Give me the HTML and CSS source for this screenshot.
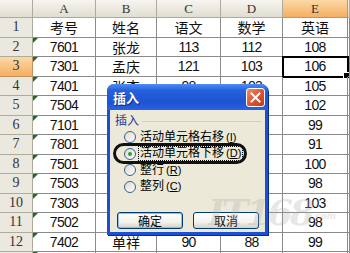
FILE: index.html
```html
<!DOCTYPE html>
<html>
	<head>
		<meta charset="UTF-8">
		<title>插入</title>
		<link rel="stylesheet" href="styles.css">
	</head>
	<body>
		<div class="sheet">
			<div class="grid">
				<div class="hd"></div><div class="hd">A</div><div class="hd">B</div><div class="hd">C</div><div class="hd">D</div><div class="hd on">E</div><div class="hd"></div>

				<div class="rh">1</div><div class="c">考号</div><div class="c">姓名</div><div class="c">语文</div><div class="c">数学</div><div class="c">英语</div><div class="c"></div>
				<div class="rh">2</div><div class="c n flag">7601</div><div class="c">张龙</div><div class="c n">113</div><div class="c n">112</div><div class="c n">108</div><div class="c"></div>
				<div class="rh on">3</div><div class="c n flag">7301</div><div class="c">孟庆</div><div class="c n">121</div><div class="c n">103</div><div class="c n active">106</div><div class="c"></div>
				<div class="rh">4</div><div class="c n flag">7401</div><div class="c">张杰</div><div class="c n">98</div><div class="c n">103</div><div class="c n">105</div><div class="c"></div>
				<div class="rh">5</div><div class="c n flag">7504</div><div class="c"></div><div class="c"></div><div class="c"></div><div class="c n">102</div><div class="c"></div>
				<div class="rh">6</div><div class="c n flag">7101</div><div class="c"></div><div class="c"></div><div class="c"></div><div class="c n">99</div><div class="c"></div>
				<div class="rh">7</div><div class="c n flag">7801</div><div class="c"></div><div class="c"></div><div class="c"></div><div class="c n">91</div><div class="c"></div>
				<div class="rh">8</div><div class="c n flag">7501</div><div class="c"></div><div class="c"></div><div class="c"></div><div class="c n">100</div><div class="c"></div>
				<div class="rh">9</div><div class="c n flag">7503</div><div class="c"></div><div class="c"></div><div class="c"></div><div class="c n">98</div><div class="c"></div>
				<div class="rh">10</div><div class="c n flag">7303</div><div class="c"></div><div class="c"></div><div class="c"></div><div class="c n">103</div><div class="c"></div>
				<div class="rh">11</div><div class="c n flag">7502</div><div class="c"></div><div class="c"></div><div class="c"></div><div class="c n">98</div><div class="c"></div>
				<div class="rh">12</div><div class="c n flag">7402</div><div class="c">单祥</div><div class="c n">90</div><div class="c n">88</div><div class="c n">99</div><div class="c"></div>
				<div class="rh"></div><div class="c flag"></div><div class="c"></div><div class="c"></div><div class="c"></div><div class="c"></div><div class="c"></div>
			</div>

			<!-- 插入对话框 -->
			<div class="dialog">
				<div class="title">
					<span>插入</span>
					<a class="close" href="javascript:;">
						<svg width="11" height="11" viewBox="0 0 11 11"><path d="M1.5 1.5 L9.5 9.5 M9.5 1.5 L1.5 9.5" stroke="#fff" stroke-width="2" stroke-linecap="square"/></svg>
					</a>
				</div>
				<div class="body">
					<div class="group">插入</div>
					<ul class="opts">
						<li><i class="radio"></i><span>活动单元格右移<em>(<u>I</u>)</em></span></li>
						<li><i class="radio checked"></i><span class="focus">活动单元格下移<em>(<u>D</u>)</em></span></li>
						<li><i class="radio"></i><span>整行<em>(<u>R</u>)</em></span></li>
						<li><i class="radio"></i><span>整列<em>(<u>C</u>)</em></span></li>
					</ul>
					<div class="btns">
						<a class="btn def" href="javascript:;">确定</a>
						<a class="btn" href="javascript:;">取消</a>
					</div>
				</div>
			</div>

			<!-- 标注圈 -->
			<div class="ring"></div>

			<div class="mark">IT168<small>.com</small></div>
		</div>
	</body>
</html>
```

FILE: styles.css
```css
*{
	margin: 0;
	padding: 0;
	box-sizing: border-box;
}
body{
	background: #fff;
	font-family: "Liberation Sans", "Noto Sans CJK SC", sans-serif;
}
.sheet{
	position: relative;
	width: 350px;
	height: 253px;
	overflow: hidden;
}
.grid{
	display: grid;
	grid-template-columns: 33px 63px 61px 64px 62px 65px 2px;
	grid-template-rows: 18px repeat(13, 19.5px);
}
.grid div{
	display: flex;
	align-items: center;
	justify-content: center;
	border-right: 1px solid #8a8a8a;
	border-bottom: 1px solid #8a8a8a;
	line-height: 1;
	color: #111;
}
.grid .hd{
	background: linear-gradient(#f7f5ef, #e0ddd2);
	border-color: #aeaa9c;
	font-family: "Liberation Serif", serif;
	font-size: 13px;
	color: #333;
}
.grid .rh{
	background: #ebe8df;
	border-color: #aeaa9c;
	font-family: "Liberation Serif", serif;
	font-size: 14px;
	color: #333;
}
.grid .on{
	background: linear-gradient(#fcd9a6, #f4ae62);
	border-color: #c9925a;
}
.grid .c{
	font-family: "Noto Sans CJK SC", sans-serif;
	font-size: 14px;
	position: relative;
}
.grid .n{
	font-family: "Liberation Sans", sans-serif;
	font-size: 14px;
	letter-spacing: -0.7px;
}
.grid .flag:before{
	content: "";
	position: absolute;
	left: 0;
	top: 0;
	border-top: 5px solid #1f6b2a;
	border-right: 5px solid transparent;
}
.grid .active{
	outline: 2px solid #000;
	outline-offset: -1px;
}
.grid .active:after{
	content: "";
	position: absolute;
	right: -3px;
	bottom: -3px;
	width: 5px;
	height: 5px;
	background: #000;
	border: 1px solid #fff;
}

.dialog{
	position: absolute;
	left: 107px;
	top: 84px;
	width: 161px;
	height: 151px;
	display: flex;
	flex-direction: column;
	padding: 0 3px 3px;
	background: #1c4fd2;
	border-radius: 7px 7px 0 0;
	box-shadow: 1px 1px 0 #0a2a8e;
}
.title{
	height: 26px;
	display: flex;
	align-items: center;
	justify-content: space-between;
	margin: 0 -3px;
	padding-left: 6px;
	padding-right: 3px;
	border-radius: 7px 7px 0 0;
	background: linear-gradient(#4d8ef5, #2660dc 25%, #1d53d4 70%, #2a62e0);
	color: #fff;
	font-family: "Noto Sans CJK SC", sans-serif;
	font-weight: bold;
	font-size: 13px;
	text-shadow: 1px 1px 0 #0c2a88;
}
.close{
	width: 19px;
	height: 19px;
	display: flex;
	align-items: center;
	justify-content: center;
	border: 1px solid #fff;
	border-radius: 3px;
	background: linear-gradient(135deg, #f08c6c, #d9532e 55%, #c23c18);
}
.body{
	flex: 1;
	background: #ece9d8;
	padding: 4px 0 0 5px;
	font-family: "Liberation Sans", "Noto Sans CJK SC", sans-serif;
	font-size: 12px;
	color: #000;
}
.group{
	display: flex;
	align-items: center;
	height: 14px;
	line-height: 14px;
	color: #1c3d9a;
}
.group:after{
	content: "";
	flex: 1;
	height: 1px;
	margin: 1px 4px 0 3px;
	background: #d0d0bf;
}
.opts{
	list-style: none;
	margin-top: 1px;
	padding-left: 9px;
}
.opts li{
	height: 16.5px;
	display: flex;
	align-items: center;
}
.radio{
	width: 12px;
	height: 12px;
	margin-right: 3px;
	border: 1px solid #3a5f8f;
	border-radius: 50%;
	background: linear-gradient(135deg, #dcd9cf, #fff);
	display: flex;
	align-items: center;
	justify-content: center;
}
.radio.checked:after{
	content: "";
	width: 4px;
	height: 4px;
	border-radius: 50%;
	background: #2aa52a;
}
.opts span{
	line-height: 13px;
	padding: 0 1px;
	white-space: nowrap;
}
.opts em{
	font-style: normal;
	font-size: 11px;
	margin-left: 2px;
}
.opts .focus{
	outline: 1px dotted #000;
}
.btns{
	display: flex;
	gap: 10px;
	margin-top: 17px;
	padding-left: 2px;
}
.btn{
	width: 66px;
	height: 17px;
	display: flex;
	align-items: center;
	justify-content: center;
	border: 1px solid #003c74;
	border-radius: 3px;
	background: linear-gradient(#fff, #f3f2ec 60%, #d6d0c5);
	color: #000;
	text-decoration: none;
	font-size: 12px;
}
.btn.def{
	box-shadow: inset 0 0 0 1px #98b8ea;
}
.ring{
	position: absolute;
	left: 113px;
	top: 143px;
	width: 134px;
	height: 21px;
	border: 3px solid #111;
	border-radius: 11px;
}
.mark{
	position: absolute;
	left: 208px;
	top: 194px;
	font-family: "DejaVu Serif", serif;
	font-style: italic;
	font-weight: bold;
	font-size: 36px;
	line-height: 1;
	letter-spacing: -3px;
	color: rgba(170, 170, 170, 0.3);
}
.mark small{
	font-size: 9px;
	letter-spacing: 0;
	vertical-align: 6px;
}
```
